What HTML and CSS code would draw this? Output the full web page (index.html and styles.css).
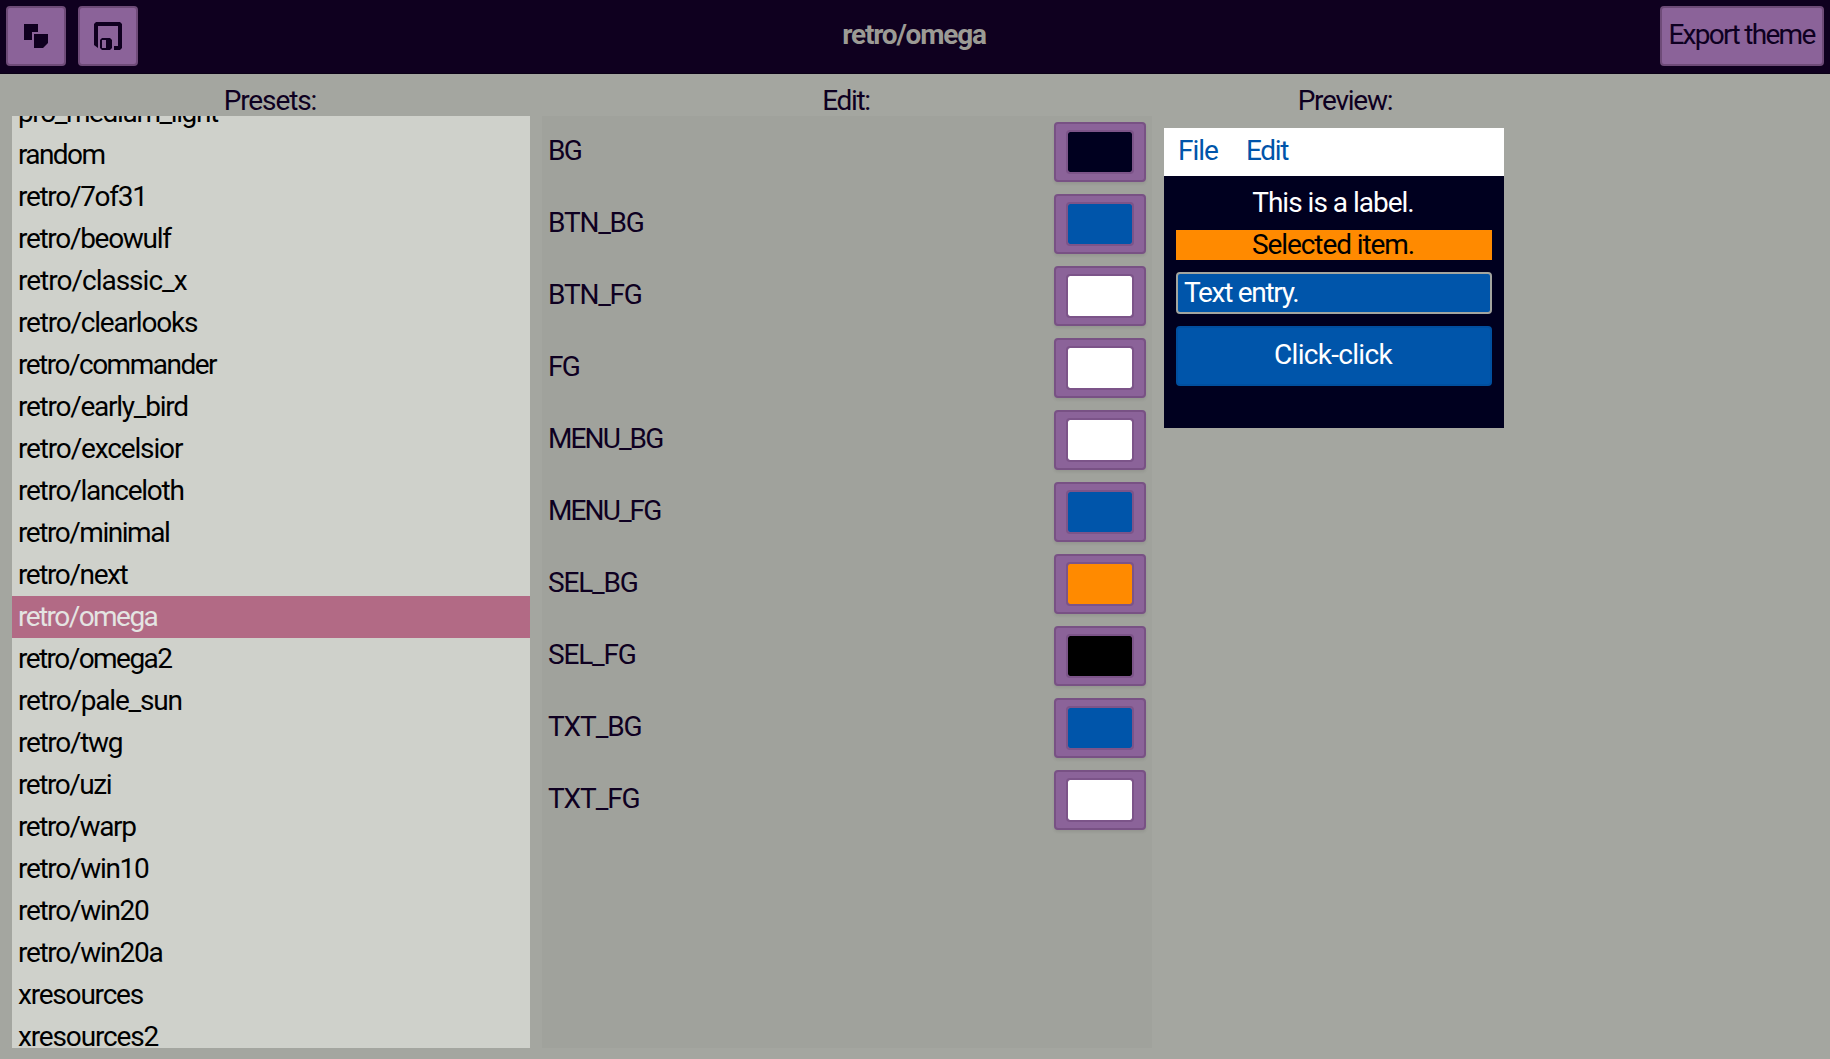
FILE: index.html
```html
<!DOCTYPE html>
<html lang="en">
<head>
<meta charset="utf-8">
<title>retro/omega</title>
<link rel="stylesheet" href="styles.css">
</head>
<body>
<header class="header">
  <div class="tools">
    <button class="btn icon-btn" aria-label="Clone">
      <svg width="60" height="60" viewBox="0 0 60 60"><path class="ink" d="M18 18h14v8h-6v8h-8zM28 28h14v9l-5 5h-9z"/></svg>
    </button>
    <button class="btn icon-btn" aria-label="Save">
      <svg width="60" height="60" viewBox="0 0 60 60"><path class="ink" d="M18 16h24l2 2v24l-2 2h-6v-4h4V20H20v22l-4-3V18z"/><path class="ink" fill-rule="evenodd" d="M24 32h8l2 2v8l-2 2h-8l-2-2v-8zM24 34v8h4v-8z"/></svg>
    </button>
  </div>
  <h1 class="title ls-12">retro/omega</h1>
  <button class="btn export ls-17">Export theme</button>
</header>
<main class="columns">
  <section class="presets">
    <h2 class="heading ls-11">Presets:</h2>
    <div class="list">
      <ul class="rows">
        <li class="ls-14">pro_medium_light</li>
        <li class="ls-16">random</li>
        <li class="ls-13">retro/7of31</li>
        <li class="ls-13">retro/beowulf</li>
        <li class="ls-10">retro/classic_x</li>
        <li class="ls-12">retro/clearlooks</li>
        <li class="ls-15">retro/commander</li>
        <li class="ls-125">retro/early_bird</li>
        <li class="ls-115">retro/excelsior</li>
        <li class="ls-125">retro/lanceloth</li>
        <li class="ls-145">retro/minimal</li>
        <li class="ls-14">retro/next</li>
        <li class="selected ls-155">retro/omega</li>
        <li class="ls-155">retro/omega2</li>
        <li class="ls-12">retro/pale_sun</li>
        <li class="ls-13">retro/twg</li>
        <li class="ls-145">retro/uzi</li>
        <li class="ls-14">retro/warp</li>
        <li class="ls-13">retro/win10</li>
        <li class="ls-13">retro/win20</li>
        <li class="ls-13">retro/win20a</li>
        <li class="ls-12">xresources</li>
        <li class="ls-115">xresources2</li>
      </ul>
    </div>
  </section>
  <section class="edit">
    <h2 class="heading ls-13">Edit:</h2>
    <div class="options">
      <div class="option ls-17"><span>BG</span><button class="btn color"><i class="swatch navy"></i></button></div>
      <div class="option ls-12"><span>BTN_BG</span><button class="btn color"><i class="swatch blue"></i></button></div>
      <div class="option ls-12"><span>BTN_FG</span><button class="btn color"><i class="swatch white"></i></button></div>
      <div class="option ls-17"><span>FG</span><button class="btn color"><i class="swatch white"></i></button></div>
      <div class="option ls-19"><span>MENU_BG</span><button class="btn color"><i class="swatch white"></i></button></div>
      <div class="option ls-19"><span>MENU_FG</span><button class="btn color"><i class="swatch blue"></i></button></div>
      <div class="option ls-12"><span>SEL_BG</span><button class="btn color"><i class="swatch orange"></i></button></div>
      <div class="option ls-12"><span>SEL_FG</span><button class="btn color"><i class="swatch black"></i></button></div>
      <div class="option ls-11"><span>TXT_BG</span><button class="btn color"><i class="swatch blue"></i></button></div>
      <div class="option ls-11"><span>TXT_FG</span><button class="btn color"><i class="swatch white"></i></button></div>
    </div>
  </section>
  <section class="preview">
    <h2 class="heading ls-125">Preview:</h2>
    <div class="sample">
      <nav class="menu"><span class="ls-10">File</span><span class="ls-13">Edit</span></nav>
      <div class="sample-body">
        <div class="label ls-10">This is a label.</div>
        <div class="sel ls-11">Selected item.</div>
        <div class="entry ls-13">Text entry.</div>
        <div class="click">Click-click</div>
      </div>
    </div>
  </section>
</main>
</body>
</html>
```
FILE: styles.css
```css
* { box-sizing: border-box; }
body {
  margin: 0;
  height: 1059px;
  overflow: hidden;
  background: #a4a6a0;
  color: #0e0021;
  font: 28px/33px Roboto, "Liberation Sans", sans-serif;
  letter-spacing: -0.7px;
  white-space: nowrap;
}
h1, h2, ul { margin: 0; padding: 0; font-size: inherit; }

/* Tracking steps */
.ls-10 { letter-spacing: -1px; }
.ls-11 { letter-spacing: -1.1px; }
.ls-115 { letter-spacing: -1.15px; }
.ls-12 { letter-spacing: -1.2px; }
.ls-125 { letter-spacing: -1.25px; }
.ls-13 { letter-spacing: -1.3px; }
.ls-14 { letter-spacing: -1.4px; }
.ls-145 { letter-spacing: -1.45px; }
.ls-15 { letter-spacing: -1.5px; }
.ls-155 { letter-spacing: -1.55px; }
.ls-16 { letter-spacing: -1.6px; }
.ls-17 { letter-spacing: -1.7px; }
.ls-19 { letter-spacing: -1.9px; }

.header {
  display: grid;
  grid-template-columns: 1fr auto 1fr;
  height: 74px;
  padding: 6px 6px 8px;
  background: #0f001f;
  border-bottom: 1px solid #0a0016;
}
.tools { display: flex; gap: 12px; }
.btn {
  height: 60px;
  padding: 0;
  border: 2px solid #785184;
  border-radius: 4px;
  background: #8b6399;
  color: inherit;
  font: inherit;
}
.header .btn { border-color: #6e4b78; }
.icon-btn { display: flex; width: 60px; }
.icon-btn svg { flex: none; margin: -2px; }
.ink { fill: #0f001f; }
.title { padding: 12px 2px 0 0; color: #9c9b95; font-weight: 700; }
.export { justify-self: end; width: 164px; padding: 0 1px 3px 0; }
.columns {
  display: grid;
  grid-template-columns: 518px 610px 364px;
  column-gap: 12px;
  height: 985px;
  padding: 9px 0 11px 12px;
}
.presets, .edit, .preview { display: flex; flex-direction: column; min-height: 0; }
.heading { height: 33px; padding: 1px 2px 0 0; font-weight: 400; text-align: center; }
.list { flex: 1; overflow: hidden; background: #cfd1cb; color: #000; }
.rows { margin-top: -24px; list-style: none; }
.rows li { height: 42px; padding: 4px 6px 5px; }
.rows .selected { background: #b26a85; color: #e4e4e2; }
.options {
  display: flex;
  flex: 1;
  flex-direction: column;
  gap: 12px;
  padding: 6px;
  background: #a0a29c;
}
.option { display: flex; align-items: center; justify-content: space-between; height: 60px; }
.option span { padding-bottom: 3px; }
.color {
  display: flex;
  align-items: center;
  justify-content: center;
  width: 92px;
  box-shadow: 0 2px 3px rgba(0, 0, 0, .08);
}
.swatch { width: 68px; height: 44px; border: 2px solid #7c5489; border-radius: 4px; background-clip: padding-box; }
.navy { background-color: #00001f; }
.blue { background-color: #0055aa; }
.white { background-color: #fff; }
.orange { background-color: #ff8a00; }
.black { background-color: #000; }
.sample { width: 340px; height: 300px; margin-top: 12px; background: #00001f; color: #fff; }
.menu { display: flex; gap: 28px; height: 48px; padding: 6px 14px; background: #fff; color: #0055aa; }
.sample-body { display: flex; flex-direction: column; padding: 10px 12px; text-align: center; }
.label { height: 44px; padding-right: 2px; }
.sel { height: 30px; padding-right: 2px; line-height: 30px; background: #ff8a00; color: #000; }
.entry {
  height: 42px;
  margin-top: 12px;
  padding: 2px 6px;
  border: 2px solid #a3a59f;
  border-radius: 4px;
  background: #0055aa;
  text-align: left;
}
.click { height: 60px; margin-top: 12px; padding: 10px 2px 0 0; border: 2px solid #004f9f; border-radius: 4px; background: #0055aa; }
```
